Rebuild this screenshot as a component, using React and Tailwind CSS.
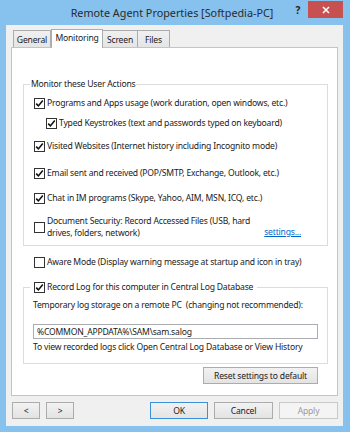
import React from "react";

function Check({ checked }) {
  return (
    <span className="w-[11px] h-[11px] border border-[#333333] bg-white flex items-center justify-center shrink-0">
      {checked && (
        <svg width="9" height="9" viewBox="0 0 9 9">
          <path d="M1.2 4.6 L3.4 6.9 L7.8 1.6" fill="none" stroke="#111" strokeWidth="1.6" />
        </svg>
      )}
    </span>
  );
}

function Row({ checked, children, className = "" }) {
  return (
    <div className={"flex items-center h-[14px] " + className}>
      <Check checked={checked} />
      <span className="ml-[2px] whitespace-nowrap">{children}</span>
    </div>
  );
}

function Btn({ children, className = "" }) {
  return (
    <div
      className={
        "h-[17px] flex items-center justify-center border bg-gradient-to-b from-[#f2f2f2] to-[#e3e3e3] " +
        className
      }
    >
      {children}
    </div>
  );
}

export default function App() {
  return (
    <div
      className="w-[350px] h-[432px] bg-[#87c1ed] flex flex-col text-[#1a1a1a] text-[8.6px] tracking-[-0.2px] leading-[12px] overflow-hidden"
      style={{ fontFamily: '"Noto Sans", "Open Sans", sans-serif' }}
    >
      {/* title bar */}
      <div className="h-[25px] relative flex items-start shrink-0">
        <div className="w-full text-center text-[10.8px] tracking-normal leading-[25px] text-[#2b2b2b] pr-[6px]">
          Remote Agent Properties [Softpedia-PC]
        </div>
        <div className="absolute right-[7px] top-[1px] flex items-start">
          <span className="text-[#222] text-[10px] font-bold leading-[14px] mr-[8px] mt-[2px]">?</span>
          <div className="w-[35px] h-[17px] bg-[#c75050] flex items-center justify-center">
            <svg width="8" height="8" viewBox="0 0 8 8">
              <path d="M1 1 L7 7 M7 1 L1 7" stroke="#fff" strokeWidth="1.5" />
            </svg>
          </div>
        </div>
      </div>

      {/* client */}
      <div className="ml-[6px] mr-[7px] mb-[6px] flex-1 bg-[#f0f0f0] flex flex-col">
        <div className="pl-[5px] pt-[4px]">
          {/* tabs */}
          <div className="flex items-end h-[18px] pl-[2px]">
            <div className="w-[38px] h-[17px] border border-b-0 border-[#acacac] bg-gradient-to-b from-[#f0f0f0] to-[#e5e5e5] flex items-center justify-center pt-[1px]">
              General
            </div>
            <div className="w-[52px] h-[19px] -mb-[1px] relative z-10 border border-b-0 border-[#acacac] bg-white flex items-start justify-center pt-[2px]">
              Monitoring
            </div>
            <div className="w-[35px] h-[17px] border border-b-0 border-l-0 border-[#acacac] bg-gradient-to-b from-[#f0f0f0] to-[#e5e5e5] flex items-center justify-center pt-[1px]">
              Screen
            </div>
            <div className="w-[32px] h-[17px] border border-b-0 border-l-0 border-[#acacac] bg-gradient-to-b from-[#f0f0f0] to-[#e5e5e5] flex items-center justify-center pt-[1px]">
              Files
            </div>
          </div>

          {/* panel */}
          <div className="w-[327px] h-[349px] border border-[#c4c4c4] bg-white flex flex-col">
            <fieldset className="ml-[11px] mr-[9px] mt-[30px] border border-[#dcdcdc] px-[6px] pb-[6px]">
              <legend className="px-[1px] leading-[12px]">Monitor these User Actions</legend>
              <div className="pl-[4px] flex flex-col">
                <Row checked className="mt-[6px]">
                  Programs and Apps usage (work duration, open windows, etc.)
                </Row>
                <Row checked className="mt-[6px] ml-[12px]">
                  Typed Keystrokes (text and passwords typed on keyboard)
                </Row>
                <Row checked className="mt-[9px]">
                  Visited Websites (Internet history including Incognito mode)
                </Row>
                <Row checked className="mt-[13px]">
                  Email sent and received (POP/SMTP, Exchange, Outlook, etc.)
                </Row>
                <Row checked className="mt-[11px]">
                  Chat in IM programs (Skype, Yahoo, AIM, MSN, ICQ, etc.)
                </Row>
                <div className="mt-[10px] flex items-center h-[24px]">
                  <Check checked={false} />
                  <span className="ml-[2px] whitespace-nowrap">
                    Document Security: Record Accessed Files (USB, hard
                    <br />
                    drives, folders, network)
                  </span>
                  <span className="ml-auto mr-[20px] self-end mb-[1px] text-[#0066cc] underline whitespace-nowrap">
                    settings...
                  </span>
                </div>
              </div>
            </fieldset>

            <Row checked={false} className="mt-[9px] ml-[22px]">
              Aware Mode (Display warning message at startup and icon in tray)
            </Row>

            <fieldset className="ml-[11px] mr-[9px] mt-[11px] border border-[#dcdcdc] px-[6px] pb-[10px]">
              <legend className="px-[4px]">
                <div className="flex items-center h-[14px]">
                  <Check checked />
                  <span className="ml-[2px] whitespace-nowrap">Record Log for this computer in Central Log Database</span>
                </div>
              </legend>
              <div className="pl-[3px] pr-[3px] flex flex-col">
                <div className="mt-[5px] whitespace-nowrap">
                  Temporary log storage on a remote PC&nbsp; (changing not recommended):
                </div>
                <div className="mt-[13px] h-[15px] border border-[#abadb3] bg-white flex items-center pl-[3px] whitespace-nowrap">
                  %COMMON_APPDATA%\SAM\sam.salog
                </div>
                <div className="mt-[2px] whitespace-nowrap">
                  To view recorded logs click Open Central Log Database or View History
                </div>
              </div>
            </fieldset>

            <div className="flex justify-end mt-[3px] mr-[19px]">
              <Btn className="w-[115px] border-[#acacac]">Reset settings to default</Btn>
            </div>
          </div>
        </div>

        {/* bottom buttons */}
        <div className="flex items-center pl-[6px] mt-[6px]">
          <Btn className="w-[28px] border-[#acacac]">&lt;</Btn>
          <Btn className="w-[28px] ml-[6px] border-[#acacac]">&gt;</Btn>
          <Btn className="w-[58px] ml-[76px] border-[#3c8fd9]">OK</Btn>
          <Btn className="w-[59px] ml-[6px] border-[#acacac]">Cancel</Btn>
          <div className="w-[59px] ml-[6px] h-[17px] flex items-center justify-center border border-[#c9c9c9] bg-[#f4f4f4] text-[#9a9a9a]">
            Apply
          </div>
        </div>
      </div>
    </div>
  );
}
